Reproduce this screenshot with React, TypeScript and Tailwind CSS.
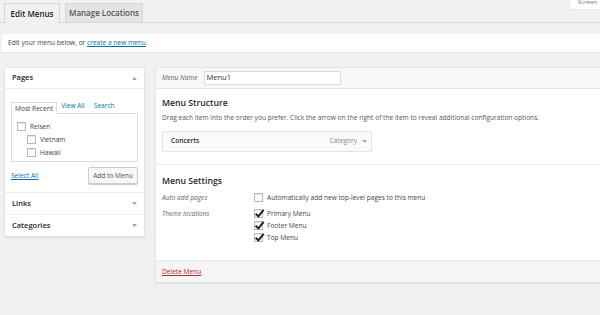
import React from 'react';

const Box = ({ checked }: { checked?: boolean }) => (
  <span className="relative inline-block w-[9px] h-[9px] border border-[#b4b9be] bg-white shrink-0 shadow-[inset_0_1px_1px_rgba(0,0,0,0.1)]">
    {checked && (
      <svg viewBox="0 0 10 10" className="absolute left-[-1px] top-[-2px] w-[11px] h-[11px]">
        <path d="M1.5 5.2 L4 7.6 L8.8 1.6" fill="none" stroke="#1e1e1e" strokeWidth="1.8" />
      </svg>
    )}
  </span>
);

const Arrow = ({ up }: { up?: boolean }) => (
  <svg viewBox="0 0 8 5" className="w-[5px] h-[3px]">
    <path d={up ? 'M0 5 L4 0 L8 5 Z' : 'M0 0 L4 5 L8 0 Z'} fill="#a0a5aa" />
  </svg>
);

export default function App() {
  return (
    <div className="relative w-[600px] h-[315px] overflow-hidden bg-[#f1f1f1] text-[#444] font-['Open_Sans',sans-serif] text-[6.6px]">
      <div className="absolute right-0 top-0 w-[30px] h-[9px] bg-white shadow-[0_0_1px_rgba(0,0,0,0.2)] pl-[8px] leading-[5px] text-[#777] text-[6px] whitespace-nowrap">Screen</div>

      {/* tabs */}
      <div className="flex items-end gap-[5px] pl-[4px] pt-[3px] border-b border-[#d8d8d8] h-[23px]">
        <div className="h-[20px] w-[56px] border border-b-0 border-[#d5d5d5] bg-[#f1f1f1] mb-[-1px] flex items-center justify-center font-semibold text-[8px] text-[#222]">Edit Menus</div>
        <div className="h-[19px] w-[78px] border border-b-0 border-[#d8d8d8] bg-[#e4e4e4] flex items-center justify-center font-semibold text-[8px] text-[#555]">Manage Locations</div>
      </div>

      {/* notice */}
      <div className="mt-[11px] ml-[2px] h-[19px] bg-white border-b border-[#e5e5e5] flex items-center pl-[6px] text-[#444]">
        Edit your menu below, or&nbsp;<span className="text-[#0073aa] underline">create a new menu</span>.
      </div>

      <div className="flex mt-[14px] gap-[10px]">
        {/* left column */}
        <div className="ml-[4px] w-[141px] shrink-0 self-start bg-white shadow-[0_1px_1px_rgba(0,0,0,0.08)] border border-[#e5e5e5]">
          <div className="h-[21px] border-b border-[#eee] flex items-center justify-between px-[7px]">
            <span className="font-semibold text-[7.5px] text-[#23282d]">Pages</span>
            <Arrow up />
          </div>
          <div className="px-[6px] pt-[12px] pb-[8px]">
            <div className="flex items-end h-[12px]">
              <div className="h-[12px] px-[3px] border border-b-0 border-[#ddd] bg-white mb-[-1px] z-10 flex items-center text-[#444]">Most Recent</div>
              <span className="ml-[4px] mb-[2px] text-[#0073aa]">View All</span>
              <span className="ml-[9px] mb-[2px] text-[#0073aa]">Search</span>
            </div>
            <div className="h-[49px] border border-[#ddd] bg-white pl-[5px] pt-[8px] flex flex-col gap-[3px]">
              <div className="flex items-center gap-[3px]"><Box /><span className="ml-[1px]">Reisen</span></div>
              <div className="flex items-center gap-[3px] pl-[10px]"><Box /><span className="ml-[1px]">Vietnam</span></div>
              <div className="flex items-center gap-[3px] pl-[10px]"><Box /><span className="ml-[1px]">Hawaii</span></div>
            </div>
            <div className="flex items-center justify-between mt-[5px]">
              <span className="text-[#0073aa] underline">Select All</span>
              <div className="h-[17px] w-[50px] border border-[#ccc] rounded-[2px] bg-[#f7f7f7] shadow-[0_1px_0_#ccc] flex items-center justify-center text-[#555]">Add to Menu</div>
            </div>
          </div>
          <div className="h-[22px] border-t border-[#eee] flex items-center justify-between px-[7px]">
            <span className="font-semibold text-[7.5px] text-[#23282d]">Links</span>
            <Arrow />
          </div>
          <div className="h-[22px] border-t border-[#eee] flex items-center justify-between px-[7px]">
            <span className="font-semibold text-[7.5px] text-[#23282d]">Categories</span>
            <Arrow />
          </div>
        </div>

        {/* right column */}
        <div className="flex-1 h-[216px] border border-[#e5e5e5] border-r-0 shadow-[0_1px_1px_rgba(0,0,0,0.05)] flex flex-col">
          <div className="h-[21px] bg-[#f7f7f7] border-b border-[#e5e5e5] flex items-center pl-[6px] gap-[6px]">
            <span className="italic text-[#666]">Menu Name</span>
            <div className="h-[14px] w-[137px] bg-white border border-[#ddd] flex items-center pl-[2px] text-[7.5px] text-[#333]">Menu1</div>
          </div>
          <div className="flex-1 bg-white px-[6px] pt-[8px]">
            <div className="font-semibold text-[8.7px] text-[#23282d]">Menu Structure</div>
            <div className="mt-[3px] text-[#555]">Drag each item into the order you prefer. Click the arrow on the right of the item to reveal additional configuration options.</div>
            <div className="mt-[8px] w-[210px] h-[21px] bg-[#fafafa] border border-[#e5e5e5] flex items-center justify-between pl-[8px] pr-[4px]">
              <span className="font-semibold text-[#23282d]">Concerts</span>
              <span className="flex items-center gap-[5px] text-[#888]">Category <Arrow /></span>
            </div>
            <div className="mt-[12px] -mx-[6px] border-t border-[#eee]"></div>
            <div className="mt-[10px] font-semibold text-[8.7px] text-[#23282d]">Menu Settings</div>
            <div className="mt-[5px] flex">
              <span className="w-[92px] italic text-[#666]">Auto add pages</span>
              <div className="flex items-center gap-[4px]"><Box /><span>Automatically add new top-level pages to this menu</span></div>
            </div>
            <div className="mt-[6px] flex">
              <span className="w-[92px] italic text-[#666]">Theme locations</span>
              <div className="flex flex-col gap-[2px]">
                <div className="flex items-center gap-[4px]"><Box checked /><span>Primary Menu</span></div>
                <div className="flex items-center gap-[4px]"><Box checked /><span>Footer Menu</span></div>
                <div className="flex items-center gap-[4px]"><Box checked /><span>Top Menu</span></div>
              </div>
            </div>
          </div>
          <div className="h-[22px] bg-[#f5f5f5] border-t border-[#e8e8e8] flex items-center pl-[6px]">
            <span className="text-[#b32d2e] underline">Delete Menu</span>
          </div>
        </div>
      </div>
    </div>
  );
}
